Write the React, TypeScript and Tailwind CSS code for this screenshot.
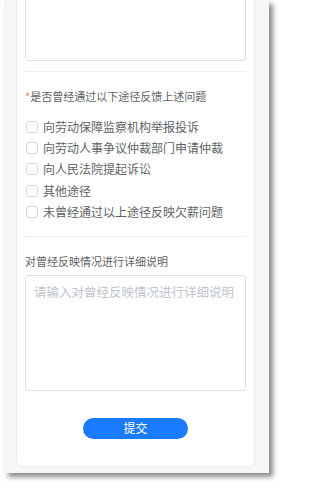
import React from "react";

const options = [
  "向劳动保障监察机构举报投诉",
  "向劳动人事争议仲裁部门申请仲裁",
  "向人民法院提起诉讼",
  "其他途径",
  "未曾经通过以上途径反映欠薪问题",
];

const App = () => {
  return (
    <div
      className="w-[282px] h-[488px] bg-white overflow-hidden"
      style={{ fontFamily: '"Noto Sans CJK SC", "Noto Sans", sans-serif' }}
    >
      <div className="ml-[4px] w-[265px] h-[473px] bg-[#f5f6f8] pl-[12px] pr-[14px] shadow-[4px_4px_5px_rgba(0,0,0,0.45)]">
        <div className="h-[467px] bg-white rounded-b-[6px] border border-t-0 border-[#ececec] px-[8px]">
          {/* previous textarea, scrolled off the top */}
          <div className="h-[61px] border border-t-0 border-[#dcdfe6] rounded-b-[4px]" />

          <div className="mt-[10px] h-px bg-[#ebeef5]" />

          <div className="mt-[17px] text-[11px] leading-[14px] text-[#606266]">
            <span className="text-[#f56c6c]">*</span>是否曾经通过以下途径反馈上述问题
          </div>

          <div className="mt-[13px] flex flex-col">
            {options.map((opt) => (
              <label key={opt} className="h-[21.4px] flex items-center gap-[5px]">
                <span className="shrink-0 w-[12px] h-[12px] ml-[1px] rounded-[3px] border border-[#d4d7de] bg-white" />
                <span className="text-[12px] leading-none text-[#606266]">{opt}</span>
              </label>
            ))}
          </div>

          <div className="mt-[13px] h-px bg-[#ebeef5]" />

          <div className="mt-[17px] text-[11px] leading-[14px] text-[#606266]">
            对曾经反映情况进行详细说明
          </div>

          <textarea
            className="mt-[7px] block w-full h-[116px] resize-none border border-[#dcdfe6] rounded-[4px] px-[8px] pt-[8px] text-[12.5px] leading-[16px] outline-none placeholder:text-[#c0c4cc]"
            placeholder="请输入对曾经反映情况进行详细说明"
          />

          <div className="mt-[27px] flex justify-center">
            <button className="w-[105px] h-[21px] rounded-full bg-[#1a7bff] text-white text-[12px] leading-none">
              提交
            </button>
          </div>
        </div>
      </div>
    </div>
  );
};

export default App;
